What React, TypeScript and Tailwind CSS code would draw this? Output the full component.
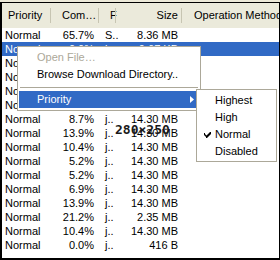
const rows: [string, string, string, string][] = [
  ['Normal', '65.7%', 'S..', '8.36 MB'],
  ['Normal', '0.0%', 'j..', '9.67 KB'],
  ['Normal', '1.2%', 'j..', '3.10 MB'],
  ['Normal', '4.4%', 'j..', '14.30 MB'],
  ['Normal', '2.0%', 'j..', '14.30 MB'],
  ['Normal', '9.1%', 'j..', '14.30 MB'],
  ['Normal', '8.7%', 'j..', '14.30 MB'],
  ['Normal', '13.9%', 'j..', '14.30 MB'],
  ['Normal', '10.4%', 'j..', '14.30 MB'],
  ['Normal', '5.2%', 'j..', '14.30 MB'],
  ['Normal', '5.2%', 'j..', '14.30 MB'],
  ['Normal', '6.9%', 'j..', '14.30 MB'],
  ['Normal', '13.9%', 'j..', '14.30 MB'],
  ['Normal', '21.2%', 'j..', '2.35 MB'],
  ['Normal', '10.4%', 'j..', '14.30 MB'],
  ['Normal', '0.0%', 'j..', '416 B'],
];

const cols = 'grid grid-cols-[50px_48px_17px_66px_1fr]';

function Sep() {
  return <div className="absolute right-0 top-[5px] h-[15px] w-[2px] border-l border-[#c7c5b2] border-r-white" />;
}

export default function App() {
  return (
    <div
      className="relative w-[280px] h-[260px] overflow-hidden bg-[#ece9d8] pt-[2px] text-[11px] text-black"
      style={{ fontFamily: '"Liberation Sans", Arial, sans-serif' }}
    >
      <div className="h-[258px] border-t border-l-2 border-r border-b-2 border-black bg-white">
        <div className={`${cols} h-[25px] bg-[#ebeadb] leading-[25px] whitespace-nowrap overflow-hidden`}>
          <div className="relative pl-[6px]">Priority<Sep /></div>
          <div className="relative pl-[10px]">Com…<Sep /></div>
          <div className="relative pl-[10px]">F<Sep /></div>
          <div className="relative pr-[5px] text-right">Size<Sep /></div>
          <div className="pl-[11px] overflow-hidden">Operation Method</div>
        </div>
        {rows.map((r, i) => (
          <div
            key={i}
            className={`${cols} h-[14px] leading-[14px] whitespace-nowrap ${i === 1 ? 'bg-[#316ac5] text-white' : ''}`}
          >
            <div className="pl-[3px]">{r[0]}</div>
            <div className="pr-[6px] text-right">{r[1]}</div>
            <div className="pl-[5px]">{r[2]}</div>
            <div className="pr-[5px] text-right">{r[3]}</div>
            <div />
          </div>
        ))}
      </div>

      <div className="absolute left-[17px] top-[46px] w-[184px] border border-[#aca899] bg-white px-[1px] py-[2px]">
        <div className="h-[17px] leading-[17px] pl-[18px] text-[#aca899]">Open File…</div>
        <div className="h-[17px] leading-[17px] pl-[18px]">Browse Download Directory..</div>
        <div className="h-[8px] flex items-center px-[1px]">
          <div className="h-px w-full bg-[#aca899]" />
        </div>
        <div className="relative h-[17px] leading-[17px] pl-[18px] bg-[#316ac5] text-white">
          Priority
          <svg className="absolute left-[171px] top-[5px]" width="4" height="7" viewBox="0 0 4 7">
            <path d="M0 0 L4 3.5 L0 7 Z" fill="white" />
          </svg>
        </div>
      </div>

      <div className="absolute left-[196px] top-[89px] w-[81px] border border-[#aca899] bg-white px-[1px] pt-[2px] pb-[1px]">
        <div className="h-[17px] leading-[17px] pl-[17px]">Highest</div>
        <div className="h-[17px] leading-[17px] pl-[17px]">High</div>
        <div className="relative h-[17px] leading-[17px] pl-[17px]">
          <svg className="absolute left-[6px] top-[5px]" width="7" height="7" viewBox="0 0 7 7">
            <path d="M0 2 L0 4 L2 6 L2 7 L3 7 L7 3 L7 1 L6 1 L2.5 4.5 L1 3 L1 2 Z" fill="black" />
          </svg>
          Normal
        </div>
        <div className="h-[17px] leading-[17px] pl-[17px]">Disabled</div>
      </div>

      <div
        className="absolute left-[115px] top-[123px] text-[13px] leading-[13px] font-bold text-[#1a1a1a]"
        style={{ fontFamily: '"DejaVu Sans Mono", monospace' }}
      >
        280×250
      </div>
    </div>
  );
}
